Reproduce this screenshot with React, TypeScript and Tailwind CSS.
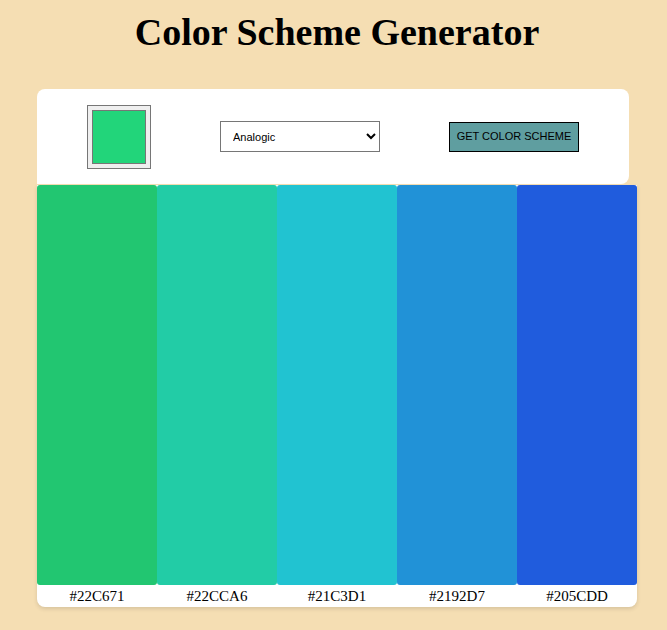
import React, { useState } from 'react'

const scheme = ['#22C671', '#22CCA6', '#21C3D1', '#2192D7', '#205CDD']

function Header() {
  const [mode, setMode] = useState('analogic')
  return (
    <div className="w-[592px] h-[95px] bg-white rounded-t-lg rounded-br-lg flex items-center justify-between px-[50px]">
      <div className="w-16 h-16 border border-[#767676] bg-[#efefef] p-1">
        <div className="w-full h-full border border-[#767676] bg-[#22D57A]" />
      </div>
      <select
        value={mode}
        onChange={(e) => setMode(e.target.value)}
        className="w-40 h-[31px] border border-[#767676] bg-white pl-2 pr-1 text-[11px] text-black font-['Liberation_Sans',Arial,sans-serif]"
      >
        <option value="monochrome">Monochrome</option>
        <option value="monochrome-dark">Monochrome-dark</option>
        <option value="monochrome-light">Monochrome-light</option>
        <option value="analogic">Analogic</option>
        <option value="complement">Complement</option>
        <option value="analogic-complement">Analogic-complement</option>
        <option value="triad">Triad</option>
      </select>
      <button className="w-[130px] h-[30px] border border-black bg-[#5F9EA0] text-[11px] font-normal text-black font-['Liberation_Sans',Arial,sans-serif]">
        GET COLOR SCHEME
      </button>
    </div>
  )
}

export default function App() {
  return (
    <div className="min-h-[630px] bg-[#F5DEB3] flex flex-col items-center pl-[7px] font-['Liberation_Serif',Georgia,serif]">
      <h1 className="text-[38px] font-bold text-black leading-none mt-[13px] mb-[38px]">Color Scheme Generator</h1>
      <div className="w-[600px]">
        <Header />
        <div className="mt-px bg-white rounded-b-lg shadow-[0_2px_4px_rgba(0,0,0,0.12)]">
          <div className="flex">
            {scheme.map((c) => (
              <div key={c} className="w-[120px] h-[400px] rounded-[3px]" style={{ backgroundColor: c }} />
            ))}
          </div>
          <div className="flex h-[22px]">
            {scheme.map((c) => (
              <p key={c} className="w-[120px] text-center text-[15px] leading-[22px] text-black">{c}</p>
            ))}
          </div>
        </div>
      </div>
    </div>
  )
}
